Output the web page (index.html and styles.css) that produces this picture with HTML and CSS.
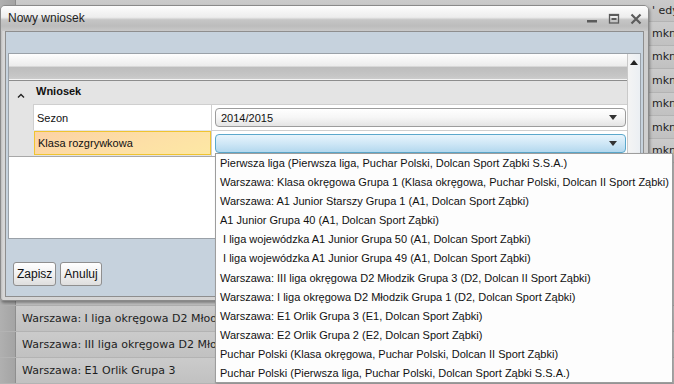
FILE: index.html
```html
<!DOCTYPE html>
<html lang="pl">
<head>
<meta charset="utf-8">
<title>Nowy wniosek</title>
<link rel="stylesheet" href="styles.css">
</head>
<body>
<div class="app">
  <div class="bg-top">
    <div class="bg-row"><span class="gut"></span><span class="main"></span><span class="side">' edycja</span></div>
    <div class="bg-row"><span class="gut"></span><span class="main"></span><span class="side">mkniety</span></div>
    <div class="bg-row"><span class="gut"></span><span class="main"></span><span class="side">mkniety</span></div>
    <div class="bg-row"><span class="gut"></span><span class="main"></span><span class="side">mkniety</span></div>
    <div class="bg-row"><span class="gut"></span><span class="main"></span><span class="side">mkniety</span></div>
    <div class="bg-row"><span class="gut"></span><span class="main"></span><span class="side">mkniety</span></div>
    <div class="bg-row"><span class="gut"></span><span class="main"></span><span class="side">mkniety</span></div>
  </div>
  <div class="bg-fill"><span class="gut"></span><span class="main"></span></div>
  <div class="bg-bottom">
    <div class="bg-row tall"><span class="gut"></span><span class="main">Warszawa: I liga okręgowa D2 Młodzik Grupa 1</span><span class="side"></span></div>
    <div class="bg-row tall"><span class="gut"></span><span class="main">Warszawa: III liga okręgowa D2 Młodzik Grupa 3</span><span class="side"></span></div>
    <div class="bg-row tall"><span class="gut"></span><span class="main">Warszawa: E1 Orlik Grupa 3</span><span class="side"></span></div>
  </div>
</div>

<div class="window">
  <div class="titlebar">
    <span class="title">Nowy wniosek</span>
    <span class="controls">
      <svg class="ctl" width="12" height="12" viewBox="0 0 12 12"><rect x="1" y="7" width="10" height="2.5" fill="#5b5b5b"/></svg>
      <svg class="ctl" width="12" height="12" viewBox="0 0 12 12"><rect x="1.5" y="1.5" width="9" height="8.5" fill="none" stroke="#5b5b5b" stroke-width="1.3"/><rect x="1.5" y="1" width="9" height="2" fill="#5b5b5b"/><rect x="3.5" y="5" width="5" height="2" fill="#5b5b5b"/></svg>
      <svg class="ctl" width="12" height="12" viewBox="0 0 12 12"><path d="M1.5 1.5 L10.5 10.5 M10.5 1.5 L1.5 10.5" stroke="#5b5b5b" stroke-width="2.2" fill="none"/></svg>
    </span>
  </div>
  <div class="wbody">
    <div class="panel">
      <div class="panel-main">
        <div class="grid-head"></div>
        <div class="section">
          <div class="section-head"><span class="caret-svg"><svg width="8" height="5" viewBox="0 0 8 5"><path d="M1 4.5 L4 1.5 L7 4.5" stroke="#222" stroke-width="1.4" fill="none"/></svg></span><b>Wniosek</b></div>
          <div class="prop">
            <span class="gutter"></span>
            <span class="label">Sezon</span>
            <span class="value"><span class="select"><span class="sel-text">2014/2015</span><span class="arrow"></span></span></span>
          </div>
          <div class="prop">
            <span class="gutter"></span>
            <span class="label active">Klasa rozgrywkowa</span>
            <span class="value"><span class="select focused"><span class="sel-text"></span><span class="arrow"></span></span></span>
          </div>
        </div>
        <div class="panel-empty"></div>
      </div>
      <div class="scrollbar"><span class="up"></span></div>
    </div>
    <div class="footer">
      <button class="btn">Zapisz</button>
      <button class="btn">Anuluj</button>
    </div>
  </div>
</div>

<ul class="dropdown">
  <li>Pierwsza liga (Pierwsza liga, Puchar Polski, Dolcan Sport Ząbki S.S.A.)</li>
  <li>Warszawa: Klasa okręgowa Grupa 1 (Klasa okręgowa, Puchar Polski, Dolcan II Sport Ząbki)</li>
  <li>Warszawa: A1 Junior Starszy Grupa 1 (A1, Dolcan Sport Ząbki)</li>
  <li>A1 Junior Grupa 40 (A1, Dolcan Sport Ząbki)</li>
  <li> I liga wojewódzka A1 Junior Grupa 50 (A1, Dolcan Sport Ząbki)</li>
  <li> I liga wojewódzka A1 Junior Grupa 49 (A1, Dolcan Sport Ząbki)</li>
  <li>Warszawa: III liga okręgowa D2 Młodzik Grupa 3 (D2, Dolcan II Sport Ząbki)</li>
  <li>Warszawa: I liga okręgowa D2 Młodzik Grupa 1 (D2, Dolcan Sport Ząbki)</li>
  <li>Warszawa: E1 Orlik Grupa 3 (E1, Dolcan Sport Ząbki)</li>
  <li>Warszawa: E2 Orlik Grupa 2 (E2, Dolcan Sport Ząbki)</li>
  <li>Puchar Polski (Klasa okręgowa, Puchar Polski, Dolcan II Sport Ząbki)</li>
  <li>Puchar Polski (Pierwsza liga, Puchar Polski, Dolcan Sport Ząbki S.S.A.)</li>
</ul>
</body>
</html>
```

FILE: styles.css
```css
* { box-sizing: border-box; }
html, body { margin: 0; padding: 0; }
body {
  width: 674px;
  height: 384px;
  overflow: hidden;
  position: relative;
  background: #c4c4c4;
  font-family: "Liberation Sans", Arial, sans-serif;
  font-size: 11px;
  color: #111;
}

/* background application */
.app {
  display: flex;
  flex-direction: column;
  height: 384px;
  font-family: "DejaVu Sans", Verdana, sans-serif;
  font-size: 11px;
  color: #1e1e1e;
}
.bg-top { margin-top: -1px; }
.bg-row {
  display: grid;
  grid-template-columns: 16px 636px 1fr;
  height: 23.4px;
  border-bottom: 1px solid #b3b3b3;
  background: linear-gradient(#cbcbcb, #c1c1c1);
}
.bg-row.tall { height: 26px; }
.bg-row span { display: flex; align-items: center; overflow: hidden; white-space: nowrap; }
.gut { background: linear-gradient(90deg, #b0b0b0, #a4a4a4); border-right: 1px solid #8e8e8e; }
.main { padding-left: 6px; }
.side { padding-left: 0; }
.bg-fill { flex: 1; display: grid; grid-template-columns: 16px 1fr; background: #c2c2c2; }
.bg-bottom { border-top: 1px solid #b0b0b0; }

/* window */
.window {
  position: absolute;
  left: 0;
  top: 5px;
  width: 649px;
  height: 296px;
  border: 1px solid #8a8a8a;
  border-radius: 5px 5px 3px 3px;
  background: linear-gradient(90deg, #bdbdbd, #d6d6d6 2px, #cfcfcf);
  box-shadow: 1px 2px 3px rgba(0,0,0,0.35);
  display: flex;
  flex-direction: column;
  padding: 0 4px 3px 4px;
}
.titlebar {
  height: 25px;
  margin: 0 -4px;
  padding: 0 6px 1px 7px;
  display: flex;
  align-items: center;
  justify-content: space-between;
  border-radius: 4px 4px 0 0;
  background: linear-gradient(#fdfdfd, #ededed 45%, #c6c6c6 55%, #bcbcbc 80%, #c9c9c9);
}
.title { font-size: 12px; color: #222; }
.controls { display: flex; gap: 10px; padding-top: 1px; }
.ctl { display: block; }

.wbody {
  flex: 1;
  border: 1px solid #8e8e8e;
  background: #c6d2dd;
  display: flex;
  flex-direction: column;
  padding: 21px 2px 0 2px;
}
.panel {
  height: 186px;
  border: 1px solid #9aa1a8;
  background: #fff;
  display: grid;
  grid-template-columns: 1fr 13px;
}
.panel-main { display: flex; flex-direction: column; }
.grid-head {
  height: 27px;
  background: linear-gradient(#fefefe, #ececec 45%, #bdbdbd 52%, #c6c6c6 85%, #cfcfcf);
  border-bottom: 1px solid #8d8d8d;
  box-shadow: inset 0 -1px 0 #f4f4f4;
}
.section { background: #e4e4e4; border-bottom: 1px solid #a8a8a8; }
.section-head {
  height: 23px;
  display: flex;
  align-items: center;
  padding-bottom: 3px;
  font-size: 11px;
  color: #111;
}
.caret-svg { width: 27px; padding-left: 8px; padding-top: 9px; display: flex; }
.prop {
  display: grid;
  grid-template-columns: 24px 178px 1fr;
  height: 26px;
}
.gutter { background: #e4e4e4; }
.label {
  background: #fff;
  border-top: 1px solid #cfcfcf;
  border-left: 1px solid #cfcfcf;
  display: flex;
  align-items: center;
  padding-left: 3px;
}
.label.active {
  background: linear-gradient(160deg, #fcd2a6, #fde0a6 60%, #fde8a4);
  border: 1px solid #f0c430;
  margin: 1px 0 1px 1px;
}
.value {
  background: #fff;
  border-top: 1px solid #cfcfcf;
  border-left: 1px solid #cfcfcf;
  display: flex;
  align-items: center;
  padding: 0 1px 0 3px;
}
.select {
  flex: 1;
  height: 19px;
  border: 1px solid #9c9c9c;
  border-radius: 4px;
  background: linear-gradient(#ffffff, #f6f6f6 50%, #e4e4e4);
  display: flex;
  align-items: center;
  justify-content: space-between;
  padding: 0 8px 0 5px;
}
.select.focused {
  border-color: #5ba8cc;
  background: linear-gradient(#e7f4fc, #cfe7f6 50%, #b3d8ee);
}
.arrow {
  width: 0; height: 0;
  border-left: 4px solid transparent;
  border-right: 4px solid transparent;
  border-top: 5px solid #333;
}
.panel-empty { flex: 1; background: #fff; }
.scrollbar {
  border-left: 1px solid #c9c9c9;
  background: linear-gradient(90deg, #f4f4f4, #ebeff3);
  display: flex;
  justify-content: center;
  padding-top: 6px;
}
.up {
  width: 0; height: 0;
  border-left: 4px solid transparent;
  border-right: 4px solid transparent;
  border-bottom: 5px solid #222;
}
.footer {
  flex: 1;
  display: flex;
  align-items: flex-start;
  gap: 4px;
  padding: 23px 0 0 5px;
}
.btn {
  font-family: "Liberation Sans", Arial, sans-serif;
  font-size: 12px;
  height: 24px;
  padding: 0 3px;
  border: 1px solid #8f8f8f;
  border-radius: 3px;
  background: linear-gradient(#ffffff, #f1f1f1 50%, #dedede);
  color: #111;
}

/* dropdown list */
.dropdown {
  position: absolute;
  left: 215px;
  top: 153px;
  width: 458px;
  height: 230px;
  margin: 0;
  padding: 0;
  list-style: none;
  background: #fdfdfd;
  border: 1px solid #9d9d9d;
  box-shadow: 1px 1px 2px rgba(0,0,0,0.25);
}
.dropdown li {
  height: 19.1px;
  line-height: 19px;
  padding-left: 4px;
  white-space: pre;
  color: #111;
}
```
